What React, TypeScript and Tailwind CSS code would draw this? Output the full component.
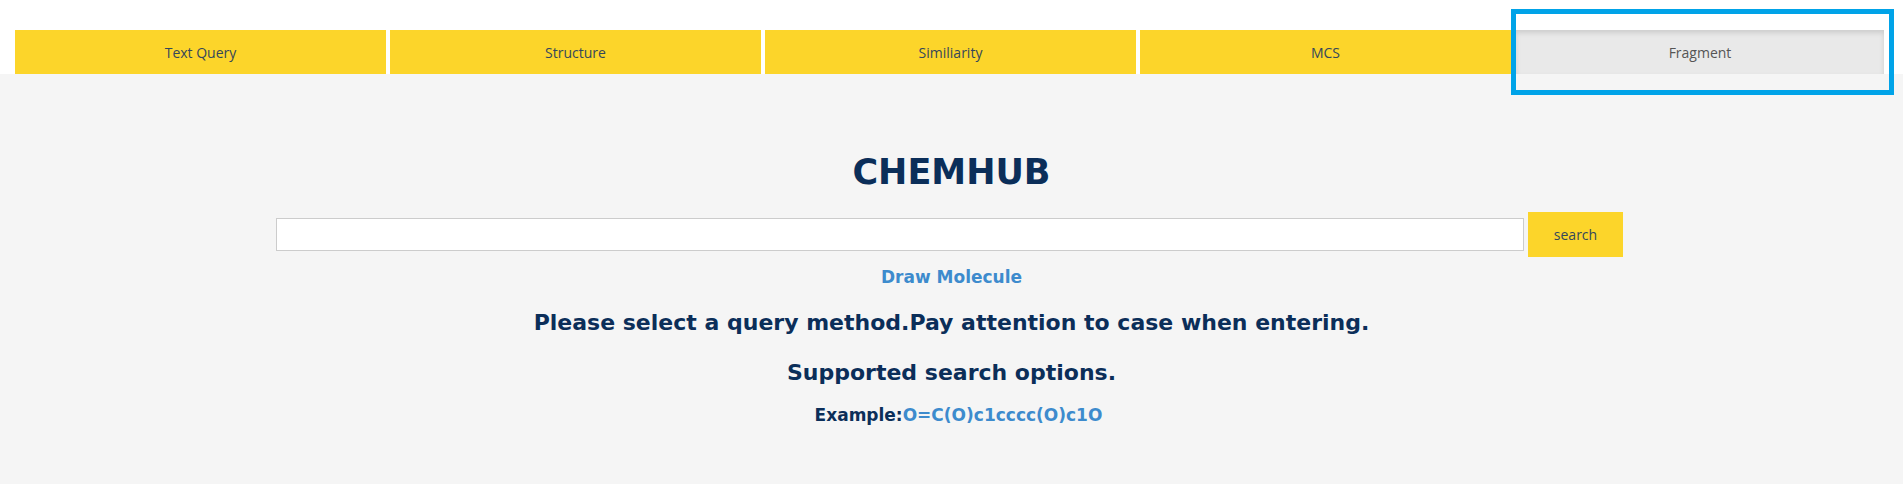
import React from 'react';

const tabs = [
  { label: 'Text Query', active: false },
  { label: 'Structure', active: false },
  { label: 'Similiarity', active: false },
  { label: 'MCS', active: false },
  { label: 'Fragment', active: true },
];

const heading = { fontFamily: '"DejaVu Sans", "Noto Sans", sans-serif' };

export default function App() {
  return (
    <div className="w-[1903px] h-[484px] bg-[#f5f5f5] overflow-hidden">
      {/* Tabs */}
      <div className="bg-white pt-[30px] pl-[15px] flex gap-[4px]">
        {tabs.map((tab) => (
          <div
            key={tab.label}
            className={
              tab.active
                ? 'relative ml-[1px] w-[368px] h-[44px] flex items-center justify-center bg-[#e9e9e9] shadow-[inset_0_3px_5px_rgba(0,0,0,0.12)] text-[14px] text-[#555]'
                : 'relative w-[371px] h-[44px] flex items-center justify-center bg-[#fcd52a] text-[14px] text-[#35475a]'
            }
            style={{ fontFamily: '"Open Sans", sans-serif' }}
          >
            {tab.label}
            {tab.active && (
              <div className="absolute -left-[5px] -top-[21px] -right-[10px] -bottom-[21px] border-[5px] border-[#00a3e8]"></div>
            )}
          </div>
        ))}
      </div>

      {/* Main */}
      <div className="flex flex-col items-center">
        <h1
          className="mt-[78px] text-[35px] leading-[40px] font-bold text-[#0b2e59]"
          style={heading}
        >
          CHEMHUB
        </h1>

        <div className="w-[1347px] mr-[4px] mt-[20px] flex items-center gap-[4px]">
          <input
            type="text"
            className="flex-1 h-[33px] bg-white border border-[#ccc] outline-none"
          />
          <button
            className="w-[95px] h-[45px] bg-[#fcd52a] text-[14px] text-[#35475a]"
            style={{ fontFamily: '"Open Sans", sans-serif' }}
          >
            search
          </button>
        </div>

        <a
          className="mt-[9px] text-[17px] leading-[22px] font-bold text-[#3d8bcd]"
          style={heading}
        >
          Draw Molecule
        </a>

        <p
          className="mt-[20px] text-[22px] leading-[30px] font-bold text-[#0b2e59]"
          style={heading}
        >
          Please select a query method.Pay attention to case when entering.
        </p>

        <p
          className="mt-[20px] text-[22px] leading-[30px] font-bold text-[#0b2e59]"
          style={heading}
        >
          Supported search options.
        </p>

        <p
          className="mt-[16px] pl-[14px] text-[17px] leading-[22px] font-bold text-[#0b2e59]"
          style={heading}
        >
          Example:<span className="text-[#3d8bcd]">O=C(O)c1cccc(O)c1O</span>
        </p>
      </div>
    </div>
  );
}
